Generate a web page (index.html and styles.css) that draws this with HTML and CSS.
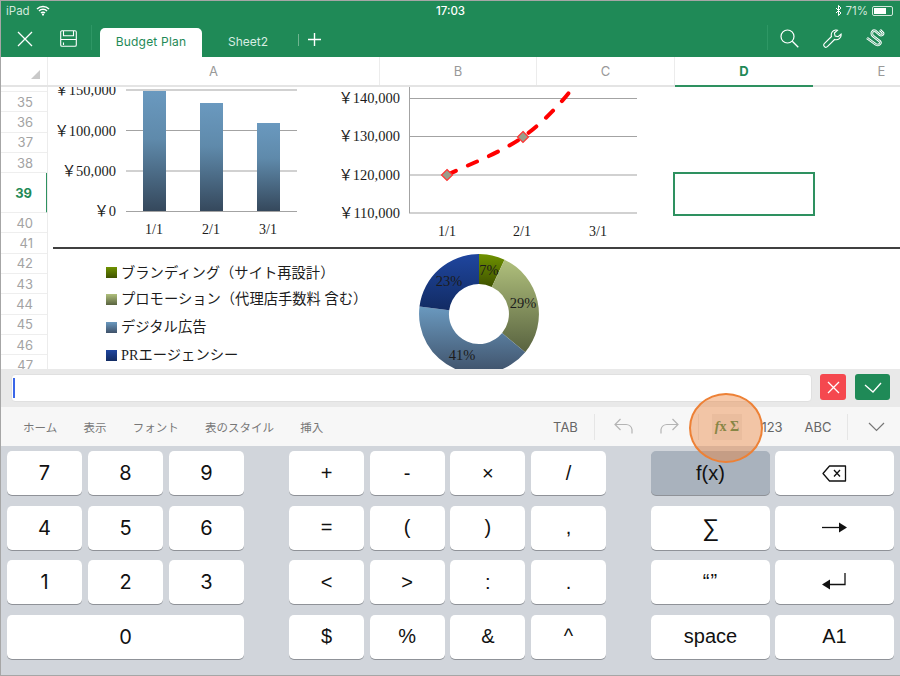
FILE: index.html
```html
<!DOCTYPE html>
<html lang="en">
<head>
    <meta charset="UTF-8">
    <meta name="viewport" content="width=device-width, initial-scale=1.0">
    <title>Budget Plan</title>
    <link rel="stylesheet" href="styles.css">
</head>
<body>
    <div class="page">
        <div class="status-bar">
            <div class="status-left">
                <span>iPad</span>
                <svg width="14" height="11" viewBox="0 0 14 11"><path d="M1 4a8.5 8.5 0 0 1 12 0M3 6a5.6 5.6 0 0 1 8 0M5 8a2.8 2.8 0 0 1 4 0" fill="none" stroke="#fff" stroke-width="1.5"/><circle cx="7" cy="9.6" r="1.1" fill="#fff"/></svg>
            </div>
            <div class="status-time">17:03</div>
            <div class="status-right">
                <svg width="7" height="11" viewBox="0 0 7 11"><path d="M1 3l5 5-2.5 2.5v-10L6 3 1 8" fill="none" stroke="#fff" stroke-width="1"/></svg>
                <span>71%</span>
                <div class="battery"><div class="battery-level"></div></div>
            </div>
        </div>

        <div class="app-bar">
            <button class="icon-btn close-btn">
                <svg width="16" height="16" viewBox="0 0 16 16"><path d="M1 1l14 14M15 1L1 15" stroke="#fff" stroke-width="1.3" fill="none"/></svg>
            </button>
            <button class="icon-btn save-btn">
                <svg width="17" height="17" viewBox="0 0 17 17"><path d="M2 .7h13a1.3 1.3 0 0 1 1.3 1.3v13a1.3 1.3 0 0 1-1.3 1.3H2A1.3 1.3 0 0 1 .7 15V2A1.3 1.3 0 0 1 2 .7zM3.500 .7v5h10v-5M.7 9.500h15.600M3.500 12.500v2.500" stroke="#fff" stroke-width="1.100" fill="none"/></svg>
            </button>
            <div class="app-sep"></div>
            <div class="tab tab-active">Budget Plan</div>
            <div class="tab tab-other">Sheet2</div>
            <div class="tab-sep"></div>
            <button class="icon-btn add-btn">
                <svg width="13" height="13" viewBox="0 0 13 13"><path d="M6.500 0v13M0 6.500h13" stroke="#fff" stroke-width="1.400"/></svg>
            </button>
            <div class="app-right">
                <div class="app-sep"></div>
                <button class="icon-btn">
                    <svg width="19" height="19" viewBox="0 0 19 19"><circle cx="7.500" cy="7.500" r="6.500" fill="none" stroke="#fff" stroke-width="1.200"/><path d="M12.300 12.300l6 6" stroke="#fff" stroke-width="1.300"/></svg>
                </button>
                <button class="icon-btn">
                    <svg width="19" height="19" viewBox="0 0 19 19"><path d="M12.500 1a5 5 0 0 0-4 6.500L1.300 14.600a2.200 2.200 0 0 0 3.100 3.100l7.200-7.200a5 5 0 0 0 6.500-5.500l-3 2.700-3-.7-.7-3 3.100-2.800a5 5 0 0 0-2-.2z" fill="none" stroke="#fff" stroke-width="1.100"/></svg>
                </button>
                <button class="icon-btn">
                    <svg width="20" height="19" viewBox="0 0 20 19"><path d="M1 9L10 15.500C12.500 17 15.500 14.500 14 12.500L7 7C4.500 4.500 6.500 .5 9.500 2L13.500 5.500C15.500 7 17.500 5.500 17 4L14 1" fill="none" stroke="#fff" stroke-width="2.600"/><path d="M1 9L10 15.500C12.500 17 15.500 14.500 14 12.500L7 7C4.500 4.500 6.500 .5 9.500 2L13.500 5.500C15.500 7 17.500 5.500 17 4L14 1" fill="none" stroke="#1f8a57" stroke-width="0.700"/></svg>
                </button>
            </div>
        </div>

        <div class="col-header">
            <div class="corner"><div class="corner-mark"></div></div>
            <div class="col col-a">A</div>
            <div class="col col-b">B</div>
            <div class="col col-c">C</div>
            <div class="col col-d">D</div>
            <div class="col col-e">E</div>
        </div>

        <div class="sheet">
            <div class="row-header">
                <div class="row row-stub"></div>
                <div class="row">35</div>
                <div class="row">36</div>
                <div class="row">37</div>
                <div class="row">38</div>
                <div class="row row-selected">39</div>
                <div class="row">40</div>
                <div class="row">41</div>
                <div class="row">42</div>
                <div class="row">43</div>
                <div class="row">44</div>
                <div class="row">45</div>
                <div class="row">46</div>
                <div class="row">47</div>
            </div>
            <div class="canvas">
                <svg class="charts" width="852" height="282" viewBox="48 87 852 282">
                    <defs>
                        <linearGradient id="bar" x1="0" y1="0" x2="0" y2="1"><stop offset="0" stop-color="#6a99bf"/><stop offset="0.4" stop-color="#5f8aab"/><stop offset="1" stop-color="#35485c"/></linearGradient>
                        <linearGradient id="g-green" x1="0" y1="0" x2="0" y2="1"><stop offset="0" stop-color="#6f9200"/><stop offset="1" stop-color="#3f5200"/></linearGradient>
                        <linearGradient id="g-olive" x1="0" y1="0" x2="0" y2="1"><stop offset="0" stop-color="#b0c07c"/><stop offset="1" stop-color="#596340"/></linearGradient>
                        <linearGradient id="g-blue" x1="0" y1="0" x2="0" y2="1"><stop offset="0" stop-color="#6a99bf"/><stop offset="1" stop-color="#3f5169"/></linearGradient>
                        <linearGradient id="g-navy" x1="0" y1="0" x2="0" y2="1"><stop offset="0" stop-color="#1f469f"/><stop offset="1" stop-color="#122b63"/></linearGradient>
                    </defs>

                    <g class="grid-line">
                        <path d="M126 90H297M126 130.500H297M126 171H297M126 211.500H297"/>
                    </g>
                    <rect x="143" y="91" width="23" height="120" fill="url(#bar)"/>
                    <rect x="200" y="103" width="23" height="108" fill="url(#bar)"/>
                    <rect x="257" y="123" width="23" height="88" fill="url(#bar)"/>
                    <g class="axis-y">
                        <text x="116" y="95">￥150,000</text>
                        <text x="116" y="135.500">￥100,000</text>
                        <text x="116" y="176">￥50,000</text>
                        <text x="116" y="216">￥0</text>
                    </g>
                    <g class="axis-x">
                        <text x="154" y="234">1/1</text>
                        <text x="211" y="234">2/1</text>
                        <text x="268" y="234">3/1</text>
                    </g>

                    <g class="grid-line">
                        <path d="M409 98.500H637M409 136.500H637M409 175H637M409 213H637M409.500 87V213"/>
                    </g>
                    <path class="trend" d="M447 175C470 164 500 153 523 137C545 121 562 102 575 85"/>
                    <path class="marker" d="M447 169.500l5.500 5.500-5.500 5.500-5.500-5.500zM523 131.500l5.500 5.500-5.500 5.500-5.500-5.500z"/>
                    <g class="axis-y">
                        <text x="400" y="103">￥140,000</text>
                        <text x="400" y="141">￥130,000</text>
                        <text x="400" y="180">￥120,000</text>
                        <text x="400" y="218">￥110,000</text>
                    </g>
                    <g class="axis-x">
                        <text x="447" y="236">1/1</text>
                        <text x="522" y="236">2/1</text>
                        <text x="598" y="236">3/1</text>
                    </g>

                    <path d="M53 248H900" stroke="#000" stroke-width="1.500"/>

                    <rect x="106" y="267" width="11" height="11" fill="url(#g-green)"/>
                    <rect x="106" y="294" width="11" height="11" fill="url(#g-olive)"/>
                    <rect x="106" y="322" width="11" height="11" fill="url(#g-blue)"/>
                    <rect x="106" y="350" width="11" height="11" fill="url(#g-navy)"/>
                    <g class="legend">
                        <text x="121" y="278">ブランディング（サイト再設計）</text>
                        <text x="121" y="304">プロモーション（代理店手数料 含む）</text>
                        <text x="121" y="332">デジタル広告</text>
                        <text x="121" y="360">PRエージェンシー</text>
                    </g>

                    <path d="M479 254A60 60 0 0 1 504.500 259.700L491.800 286.900A30 30 0 0 0 479 284Z" fill="url(#g-green)"/>
                    <path d="M504.500 259.700A60 60 0 0 1 525.200 352.200L502.100 333.100A30 30 0 0 0 491.800 286.900Z" fill="url(#g-olive)"/>
                    <path d="M525.200 352.200A60 60 0 0 1 419.500 306.500L449.200 310.200A30 30 0 0 0 502.100 333.100Z" fill="url(#g-blue)"/>
                    <path d="M419.500 306.500A60 60 0 0 1 479 254L479 284A30 30 0 0 0 449.200 310.200Z" fill="url(#g-navy)"/>
                    <g class="pie-label">
                        <text x="489" y="275">7%</text>
                        <text x="523" y="308">29%</text>
                        <text x="462" y="360">41%</text>
                        <text x="449" y="286">23%</text>
                    </g>
                </svg>
                <div class="selected-cell"></div>
            </div>
        </div>

        <div class="formula-bar">
            <div class="formula-input"><div class="caret"></div></div>
            <button class="formula-btn cancel-btn">
                <svg width="13" height="13" viewBox="0 0 13 13"><path d="M1 1l11 11M12 1L1 12" stroke="#fff" stroke-width="1.300"/></svg>
            </button>
            <button class="formula-btn ok-btn">
                <svg width="18" height="11" viewBox="0 0 18 11"><path d="M1 3l8 7 8-9" stroke="#fff" stroke-width="1.300" fill="none"/></svg>
            </button>
        </div>

        <div class="ribbon">
            <div class="ribbon-tabs">
                <span class="ribbon-tab">ホーム</span>
                <span class="ribbon-tab">表示</span>
                <span class="ribbon-tab">フォント</span>
                <span class="ribbon-tab">表のスタイル</span>
                <span class="ribbon-tab">挿入</span>
            </div>
            <div class="ribbon-tools">
                <span class="ribbon-item tab-key">TAB</span>
                <div class="ribbon-sep"></div>
                <span class="ribbon-item undo-item">
                    <svg width="20" height="17" viewBox="0 0 20 17"><path d="M6.500 1L1 6.500 6.500 12M1 6.500h11a6 6 0 0 1 6 5v4" fill="none" stroke="#b4b4b4" stroke-width="1.200"/></svg>
                </span>
                <span class="ribbon-item redo-item">
                    <svg width="20" height="17" viewBox="0 0 20 17"><path d="M13.500 1L19 6.500 13.500 12M19 6.500H8a6 6 0 0 0-6 5v4" fill="none" stroke="#b4b4b4" stroke-width="1.200"/></svg>
                </span>
                <div class="ribbon-sep"></div>
                <span class="ribbon-item fx-item"><span class="fx-box"><i>f</i>x Σ</span></span>
                <span class="ribbon-item num-item">123</span>
                <span class="ribbon-item abc-item">ABC</span>
                <div class="ribbon-sep"></div>
                <span class="ribbon-item chevron-item">
                    <svg width="17" height="10" viewBox="0 0 17 10"><path d="M1 1l7.500 7.500L16 1" fill="none" stroke="#777" stroke-width="1.200"/></svg>
                </span>
            </div>
        </div>

        <div class="keyboard">
            <div class="key-group key-group-num">
                <div class="key num">7</div>
                <div class="key num">8</div>
                <div class="key num">9</div>
                <div class="key num">4</div>
                <div class="key num">5</div>
                <div class="key num">6</div>
                <div class="key num">1</div>
                <div class="key num">2</div>
                <div class="key num">3</div>
                <div class="key num key-zero">0</div>
            </div>
            <div class="key-group key-group-ops">
                <div class="key">+</div>
                <div class="key">-</div>
                <div class="key">×</div>
                <div class="key">/</div>
                <div class="key">=</div>
                <div class="key">(</div>
                <div class="key">)</div>
                <div class="key">,</div>
                <div class="key">&lt;</div>
                <div class="key">&gt;</div>
                <div class="key">:</div>
                <div class="key">.</div>
                <div class="key">$</div>
                <div class="key">%</div>
                <div class="key">&amp;</div>
                <div class="key">^</div>
            </div>
            <div class="key-group key-group-fn">
                <div class="key key-fx">f(x)</div>
                <div class="key">
                    <svg class="backspace-icon" width="25" height="17" viewBox="0 0 25 17"><path d="M7.500 1H23.500V16H7.500L1 8.500z" fill="none" stroke="#111" stroke-width="1.300" stroke-linejoin="round"/><path d="M12 5l6 6.500M18 5l-6 6.500" stroke="#111" stroke-width="1.300"/></svg>
                </div>
                <div class="key key-sigma">∑</div>
                <div class="key">
                    <svg width="25" height="11" viewBox="0 0 25 11"><path d="M0 5.500h18" stroke="#111" stroke-width="1.300"/><path d="M17 .5l8 5-8 5z" fill="#111"/></svg>
                </div>
                <div class="key key-quotes">“”</div>
                <div class="key">
                    <svg width="24" height="18" viewBox="0 0 24 18"><path d="M23 0v11.500H6" fill="none" stroke="#111" stroke-width="1.300"/><path d="M8 6.500l-8 5 8 5z" fill="#111"/></svg>
                </div>
                <div class="key">space</div>
                <div class="key">A1</div>
            </div>
        </div>

        <div class="highlight"></div>
    </div>
</body>
</html>
```

FILE: styles.css
```css
* {
    box-sizing: border-box;
}

body {
    margin: 0;
    font-family: 'Inter', 'Noto Sans CJK JP', sans-serif;
    background-color: #fff;
}

button {
    padding: 0;
    border: none;
    background: none;
    display: flex;
    align-items: center;
    justify-content: center;
}

.page {
    position: relative;
    width: 900px;
    height: 676px;
    overflow: hidden;
    display: flex;
    flex-direction: column;
    border-top: 1px solid #a6a6a6;
    border-left: 1px solid #a6a6a6;
    border-bottom: 1px solid #a6a6a6;
}

/* status bar */
.status-bar {
    height: 19px;
    padding: 0 5px;
    display: grid;
    grid-template-columns: 1fr auto 1fr;
    align-items: center;
    background-color: #1f8a57;
    color: #fff;
    font-size: 11.500px;
}

.status-left {
    display: flex;
    align-items: center;
    gap: 6px;
    color: #d2e8dc;
}

.status-time {
    font-weight: 500;
}

.status-right {
    display: flex;
    align-items: center;
    justify-content: flex-end;
    gap: 4px;
    color: #d2e8dc;
}

.battery {
    width: 21px;
    height: 10px;
    padding: 1px;
    border: 1px solid #d2e8dc;
    border-radius: 2px;
    margin-right: 2px;
}

.battery-level {
    width: 71%;
    height: 100%;
    background-color: #fff;
}

/* app bar */
.app-bar {
    height: 37px;
    display: flex;
    align-items: center;
    background-color: #1f8a57;
}

.icon-btn {
    width: 43px;
    height: 37px;
}

.close-btn {
    width: 48px;
}

.save-btn {
    width: 40px;
    padding-right: 2px;
    margin-right: 2px;
}

.app-sep {
    width: 1px;
    height: 25px;
    margin-top: -2px;
    background-color: #2e9765;
}

.tab {
    width: 96px;
    height: 29px;
    margin-top: 8px;
    display: flex;
    align-items: center;
    justify-content: center;
    color: #d8ede2;
    font-size: 12px;
    padding-bottom: 2px;
}

.tab-other {
    padding-right: 4px;
}

.tab-active {
    width: 102px;
    margin-left: 8px;
    background-color: #fff;
    border-radius: 5px 5px 0 0;
    color: #1f8a57;
    letter-spacing: 0.2px;
}

.tab-sep {
    width: 1px;
    height: 12px;
    background-color: #6fb590;
    margin-top: 2px;
}

.add-btn {
    width: 30px;
    margin-top: 2px;
}

.app-right {
    margin-left: auto;
    display: flex;
    align-items: center;
    padding-right: 3px;
}

/* column header */
.col-header {
    height: 30px;
    display: flex;
    border-bottom: 2px solid #e4e4e4;
    background-color: #fff;
}

.corner {
    width: 47px;
    position: relative;
    border-right: 1px solid #ececec;
}

.corner-mark {
    position: absolute;
    right: 7px;
    bottom: 6px;
    width: 0;
    height: 0;
    border-left: 9px solid transparent;
    border-bottom: 9px solid #c9c9c9;
}

.col {
    display: flex;
    align-items: center;
    justify-content: center;
    color: #999;
    font-size: 13px;
    border-right: 1px solid #ececec;
}

.col-a {
    width: 332px;
}

.col-b {
    width: 157px;
}

.col-c {
    width: 138px;
}

.col-d {
    width: 138px;
    margin-bottom: -2px;
    border-right: none;
    border-bottom: 2px solid #2e9160;
    color: #1f8a57;
    font-weight: 700;
}

.col-e {
    flex: 1;
    padding-left: 50px;
    border-right: none;
}

/* sheet */
.sheet {
    height: 282px;
    display: flex;
    background-color: #fff;
}

.row-header {
    width: 47px;
    height: 282px;
    overflow: hidden;
    flex-shrink: 0;
    border-right: 1px solid #ececec;
}

.row {
    height: 20.300px;
    padding-right: 14px;
    display: flex;
    align-items: center;
    justify-content: flex-end;
    border-bottom: 1px solid #eeeeee;
    color: #a3a3a3;
    font-size: 13px;
}

.row-stub {
    height: 5px;
}

.row-selected {
    height: 40px;
    margin-right: -1px;
    border-right: 2px solid #2e9160;
    padding-right: 14px;
    color: #1f8a57;
    font-weight: 700;
}

.canvas {
    position: relative;
    flex: 1;
    overflow: hidden;
}

.charts {
    display: block;
}

.charts text {
    fill: #1c1c1c;
}

.grid-line path {
    fill: none;
    stroke: #a3a3a3;
    stroke-width: 1;
}

.axis-y text {
    font-family: 'Liberation Serif', 'Noto Sans CJK JP', serif;
    font-size: 14.500px;
    text-anchor: end;
}

.axis-x text {
    font-family: 'Liberation Serif', serif;
    font-size: 14px;
    text-anchor: middle;
}

.legend text {
    font-family: 'Liberation Serif', 'Noto Sans CJK JP', sans-serif;
    font-size: 14.300px;
}

.pie-label text {
    font-family: 'Liberation Serif', serif;
    font-size: 14.500px;
    text-anchor: middle;
}

.trend {
    fill: none;
    stroke: #f00;
    stroke-width: 4;
    stroke-linecap: round;
    stroke-dasharray: 10 13;
}

.marker {
    fill: #9a9d8a;
    stroke: #f33;
    stroke-width: 1.200;
}

.selected-cell {
    position: absolute;
    left: 625px;
    top: 85px;
    width: 142px;
    height: 44px;
    border: 2px solid #2e9160;
}

/* formula bar */
.formula-bar {
    height: 38px;
    padding: 5px 10px 5px 10px;
    display: flex;
    align-items: flex-start;
    background-color: #e9e9e9;
}

.formula-input {
    width: 801px;
    height: 28px;
    padding: 3px 1px;
    background-color: #fff;
    border: 1px solid #e0e0e0;
    border-radius: 4px;
}

.caret {
    width: 2px;
    height: 20px;
    background-color: #3a66e8;
}

.formula-btn {
    height: 26px;
    border-radius: 3px;
}

.cancel-btn {
    width: 26px;
    margin-left: 8px;
    background-color: #f5484f;
}

.ok-btn {
    width: 35px;
    margin-left: 9px;
    background-color: #1f8a57;
}

/* ribbon */
.ribbon {
    height: 39px;
    display: flex;
    align-items: center;
    background-color: #f7f7f7;
    font-size: 11.500px;
    color: #777;
}

.ribbon-tabs {
    display: flex;
    padding-left: 22px;
    gap: 26.300px;
}

.ribbon-tab {
    white-space: nowrap;
}

.ribbon-tools {
    margin-left: auto;
    display: flex;
    align-items: center;
}

.ribbon-item {
    display: flex;
    align-items: center;
    justify-content: center;
    font-size: 13px;
    color: #666;
}

.tab-key {
    width: 46px;
    padding-right: 11px;
}

.ribbon-sep {
    width: 1px;
    height: 26px;
    background-color: #e6e6e6;
}

.undo-item,
.redo-item {
    width: 45px;
}

.undo-item {
    margin-left: 6px;
}

.redo-item {
    margin-right: 7px;
}

.fx-item {
    width: 50px;
    padding-left: 6px;
}

.fx-box {
    width: 30px;
    height: 26px;
    display: flex;
    align-items: center;
    justify-content: center;
    white-space: pre;
    background-color: #e8e8e8;
    color: #3f8a50;
    font-family: 'Liberation Serif', serif;
    font-size: 14px;
    font-weight: 700;
}

.num-item {
    width: 46px;
}

.abc-item {
    width: 46px;
    margin-right: 6px;
}

.chevron-item {
    width: 52px;
    padding-left: 4px;
}

/* keyboard */
.keyboard {
    flex: 1;
    padding: 5px 5px 0 6px;
    display: flex;
    gap: 45px;
    background-color: #d1d5db;
}

.key-group {
    display: grid;
    grid-auto-rows: 44px;
    row-gap: 10.500px;
    column-gap: 5.500px;
}

.key-group-num {
    grid-template-columns: repeat(3, 75px);
    column-gap: 6px;
}

.key-group-ops {
    grid-template-columns: repeat(4, 75px);
    column-gap: 5.670px;
}

.key-group-fn {
    grid-template-columns: repeat(2, 119px);
    column-gap: 5px;
}

.key {
    display: flex;
    align-items: center;
    justify-content: center;
    background-color: #fff;
    border-radius: 5px;
    box-shadow: 0 1px 0 #8f9298;
    color: #111;
    font-family: 'Liberation Sans', sans-serif;
    font-size: 20px;
}

.num {
    font-family: 'Inter', sans-serif;
}

.key-zero {
    grid-column: span 3;
}

.key-fx {
    background-color: #a9b2bd;
}

.key-sigma {
    font-size: 24px;
}

.key-quotes {
    align-items: flex-start;
    padding-top: 10px;
    font-size: 20px;
    letter-spacing: 1px;
}

/* orange circle over the fx button */
.highlight {
    position: absolute;
    left: 688px;
    top: 392px;
    width: 74px;
    height: 70px;
    border-radius: 50%;
    background-color: rgba(237, 129, 54, 0.42);
    border: 2px solid #ed8136;
}
```
